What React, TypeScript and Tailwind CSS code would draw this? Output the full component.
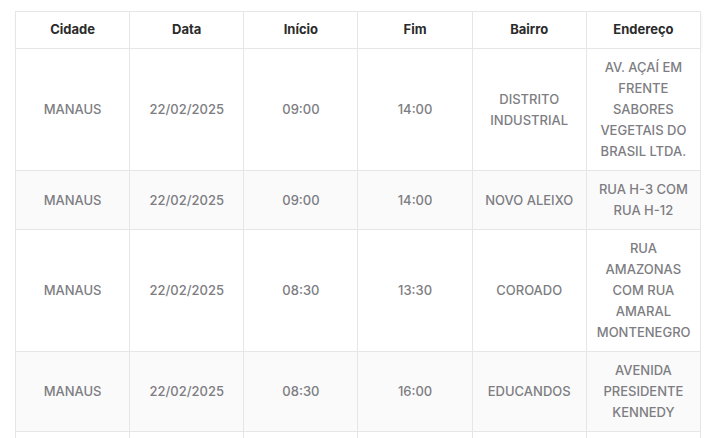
import React from "react";

const rows = [
  ["MANAUS", "22/02/2025", "09:00", "14:00", "DISTRITO INDUSTRIAL", "AV. AÇAÍ EM FRENTE SABORES VEGETAIS DO BRASIL LTDA."],
  ["MANAUS", "22/02/2025", "09:00", "14:00", "NOVO ALEIXO", "RUA H-3 COM RUA H-12"],
  ["MANAUS", "22/02/2025", "08:30", "13:30", "COROADO", "RUA AMAZONAS COM RUA AMARAL MONTENEGRO"],
  ["MANAUS", "22/02/2025", "08:30", "16:00", "EDUCANDOS", "AVENIDA PRESIDENTE KENNEDY"],
];

const headers = ["Cidade", "Data", "Início", "Fim", "Bairro", "Endereço"];

export default function App() {
  return (
    <div className="h-[438px] w-[706px] overflow-hidden bg-white pl-[15px] pt-[11px]" style={{ fontFamily: "Inter, 'Noto Sans', sans-serif" }}>
      <table className="w-[686px] table-fixed border-collapse border border-[#e6e6e6]">
        <thead className="shadow-[0_2px_3px_rgba(0,0,0,0.07)]">
          <tr className="h-[37px]">
            {headers.map((h) => (
              <th key={h} className="border border-[#e6e6e6] px-2 text-[13px] font-bold text-[#2b2b2b]">
                {h}
              </th>
            ))}
          </tr>
        </thead>
        <tbody>
          {rows.map((r, i) => (
            <tr key={i} className={i % 2 === 1 ? "bg-[#fafafa]" : "bg-white"}>
              {r.map((c, j) => (
                <td key={j} className="border border-[#e6e6e6] px-[10px] py-[8px] text-center text-[13px] font-medium leading-[21px] text-[#7d7d82]">
                  {c}
                </td>
              ))}
            </tr>
          ))}
          {/* next row continues below the fold */}
          <tr className="h-[40px] bg-white">
            {headers.map((h) => (
              <td key={h} className="border border-[#e6e6e6]" />
            ))}
          </tr>
        </tbody>
      </table>
    </div>
  );
}
